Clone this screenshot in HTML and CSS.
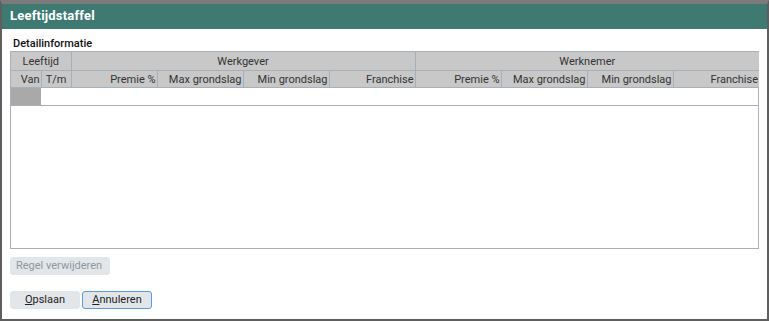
FILE: index.html
```html
<!DOCTYPE html>
<html lang="nl">
<head>
    <meta charset="UTF-8">
    <title>Leeftijdstaffel</title>
    <link rel="stylesheet" href="styles.css">
</head>
<body>
    <div class="window">
        <!-- titelbalk -->
        <div class="titlebar">Leeftijdstaffel</div>
        <div class="content">
            <div class="section-label">Detailinformatie</div>
            <div class="grid">
                <table class="grid-table">
                    <colgroup>
                        <col class="c-age"><col class="c-age">
                        <col class="c-val"><col class="c-val"><col class="c-val"><col class="c-val">
                        <col class="c-val"><col class="c-val"><col class="c-val"><col class="c-last">
                    </colgroup>
                    <thead>
                        <tr class="head-top">
                            <th colspan="2">Leeftijd</th>
                            <th colspan="4">Werkgever</th>
                            <th colspan="4">Werknemer</th>
                        </tr>
                        <tr class="head-sub">
                            <th class="num">Van</th>
                            <th>T/m</th>
                            <th class="num">Premie %</th>
                            <th class="num">Max grondslag</th>
                            <th class="num">Min grondslag</th>
                            <th class="num">Franchise</th>
                            <th class="num">Premie %</th>
                            <th class="num">Max grondslag</th>
                            <th class="num">Min grondslag</th>
                            <th class="num">Franchise</th>
                        </tr>
                    </thead>
                    <tbody>
                        <tr class="row">
                            <td class="row-marker"></td>
                            <td colspan="9"></td>
                        </tr>
                    </tbody>
                </table>
            </div>
            <button class="btn btn-disabled" disabled>Regel verwijderen</button>
            <div class="actions">
                <button class="btn"><u>O</u>pslaan</button>
                <button class="btn btn-focus"><u>A</u>nnuleren</button>
            </div>
        </div>
    </div>
</body>
</html>
```

FILE: styles.css
```css
/* basis */
body {
    margin: 0;
    font-family: Roboto, "Liberation Sans", Arial, sans-serif;
    font-size: 11px;
    color: #222;
    background: #fff;
}

/* venster */
.window {
    width: 769px;
    height: 321px;
    box-sizing: border-box;
    border-top: 4px solid #7b7b7b;
    border-left: 2px solid #5e5e5e;
    border-right: 2px solid #5e5e5e;
    border-bottom: 2px solid #5e5e5e;
    background: #fff;
}

/* titelbalk */
.titlebar {
    height: 25px;
    line-height: 24px;
    padding-left: 8px;
    background: #3e7a72;
    color: #fff;
    font-weight: bold;
    font-size: 13px;
    letter-spacing: 0.2px;
}

.content {
    padding: 8px 0 0 8px;
}

.section-label {
    height: 14px;
    line-height: 14px;
    padding-left: 3px;
    font-size: 11px;
    font-weight: 500;
    color: #111;
}

/* grid */
.grid {
    width: 749px;
    height: 198px;
    box-sizing: border-box;
    border: 1px solid #a7b0b8;
    border-top: none;
}

.grid-table {
    width: 748px;
    border-collapse: collapse;
    table-layout: fixed;
}

.c-age { width: 30px; }
.c-val { width: 86px; }
.c-last { width: 86px; }

.grid-table th {
    background: #c8c8c8;
    border: 1px solid #a7b0b8;
    font-weight: normal;
    color: #333;
    padding: 0;
    white-space: nowrap;
    overflow: hidden;
}

.grid-table tr > :first-child { border-left: none; }
.grid-table tr > :last-child { border-right: none; }

.head-top th {
    height: 18px;
    text-align: center;
}

.head-sub th {
    height: 16px;
    text-align: center;
}

.head-sub th.num {
    text-align: right;
    padding-right: 1px;
}

.row td {
    height: 17px;
    padding: 0;
    border-bottom: 1px solid #a7b0b8;
}

.row .row-marker {
    background: #a9a9a9;
}

/* knoppen */
.btn {
    font-family: Roboto, "Liberation Sans", Arial, sans-serif;
    font-size: 11px;
    height: 18px;
    padding: 0 5px;
    border: 1px solid #e2e6e9;
    border-radius: 3px;
    background: #e2e6e9;
    color: #222;
    line-height: 16px;
    white-space: nowrap;
}

.btn u {
    text-decoration: underline;
}

.btn-disabled {
    width: 100px;
    margin-top: 8px;
    color: #8f979e;
    display: block;
    text-align: left;
}

.actions {
    display: flex;
    gap: 2px;
    margin-top: 16px;
}

.actions .btn {
    width: 70px;
    text-align: center;
}

.btn-focus {
    border-color: #5b9be0;
}
```
